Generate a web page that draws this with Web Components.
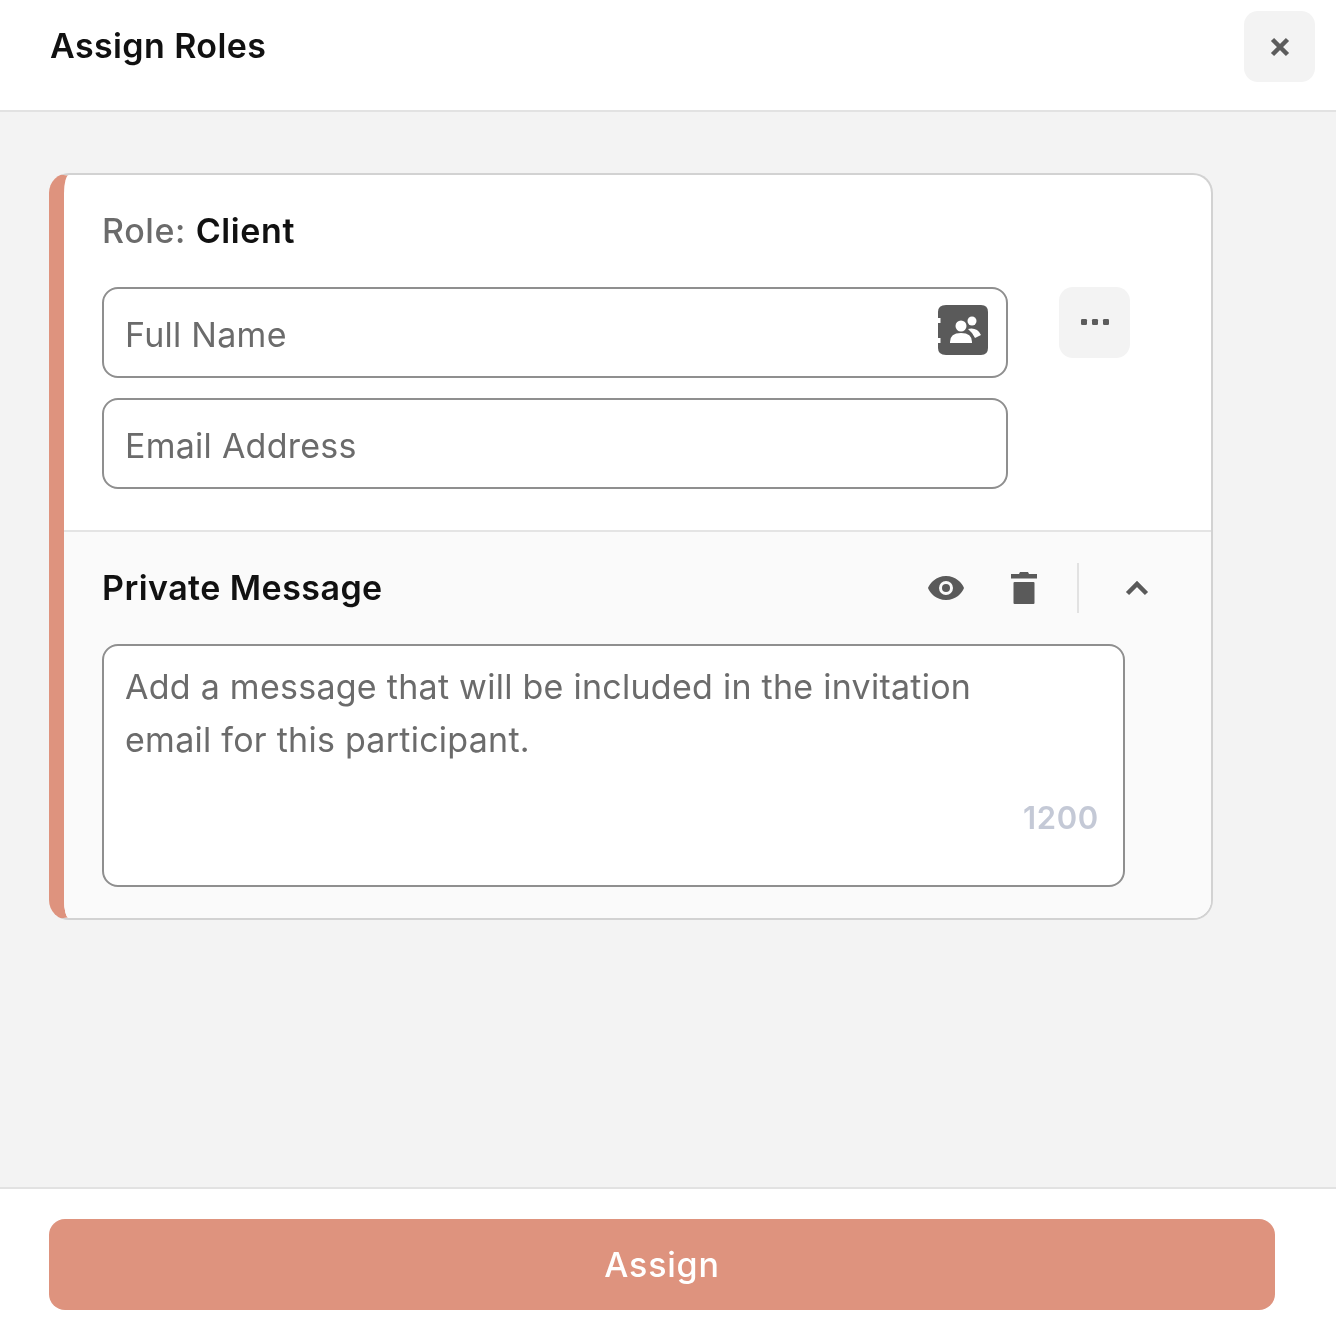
<!DOCTYPE html>
<html>
<head>
<meta charset="utf-8">
<title>Assign Roles</title>
<style>
  html, body { margin: 0; padding: 0; }
  body { font-family: Inter, "Noto Sans", sans-serif; background: #f3f3f3; }
</style>
</head>
<body>
<assign-dialog></assign-dialog>

<script>
const ICONS = {
    close: `<svg style="margin-top:2px" width="22" height="22" viewBox="0 0 22 22"><path d="M3.5 3.5 L18.500 18.500 M18.500 3.500 L3.500 18.500" stroke="#5c5c5c" stroke-width="4.500" fill="none"/></svg>`,
    dots: `<svg style="margin-bottom:2px" width="28" height="6" viewBox="0 0 28 6" fill="#5c5c5c"><rect width="6" height="6" rx="1.200"/><rect x="11" width="6" height="6" rx="1.200"/><rect x="22" width="6" height="6" rx="1.200"/></svg>`,
    contacts: `<svg width="52" height="52" viewBox="0 0 52 52"><path fill="#5a5a5a" d="M9 1 H44 Q51 1 51 8 V44 Q51 51 44 51 H9 Q1 51 1 44 V39 H3.500 V34 H1 V19 H3.500 V14 H1 V8 Q1 1 9 1Z"/><g fill="#fff"><circle cx="24" cy="22" r="5.500"/><circle cx="35" cy="17" r="4.500"/><path d="M13 38 Q13 29 24 29 Q35 29 35 38 V39 H13Z"/><path d="M31 25 Q40 23 44 31 L38 34 Q36 29 31 25Z"/></g></svg>`,
    eye: `<svg width="38" height="26" viewBox="0 0 38 26"><path fill="#5a5a5a" fill-rule="evenodd" d="M19 1 C29 1 35 8 37 13 C35 18 29 25 19 25 C9 25 3 18 1 13 C3 8 9 1 19 1Z M19 6 A7 7 0 1 0 19 20 A7 7 0 1 0 19 6Z"/><circle cx="19" cy="13" r="4" fill="#5a5a5a"/></svg>`,
    trash: `<svg width="26" height="32" viewBox="0 0 26 32" fill="#5a5a5a"><path d="M9 0 H17 L18 2 H26 V6.500 H0 V2 H8Z"/><rect x="2.500" y="10" width="21" height="22" rx="1"/></svg>`,
    chevron: `<svg width="24" height="16" viewBox="0 0 24 16"><path d="M2.500 13.500 L12 4 L21.500 13.500" stroke="#5a5a5a" stroke-width="4.500" fill="none"/></svg>`
};

class IconButton extends HTMLElement {
    connectedCallback() {
        if (this.shadowRoot) return;
        this.attachShadow({ mode: "open" });
        this.shadowRoot.innerHTML = `
            <style>
            :host { display: flex; flex: none; width: 71px; height: 71px; align-items: center; justify-content: center; background: #f3f3f3; border-radius: 14px; }
            </style>
            ${ICONS[this.getAttribute("icon")]}
        `;
    }
}
customElements.define("icon-button", IconButton);

class TextField extends HTMLElement {
    connectedCallback() {
        if (this.shadowRoot) return;
        this.attachShadow({ mode: "open" });
        this.shadowRoot.innerHTML = `
            <style>
            :host { display: flex; box-sizing: border-box; width: 906px; height: 91px; align-items: center; justify-content: space-between; padding: 4px 17px 0 21px; background: #fff; border: 2px solid #8f8f8f; border-radius: 16px; color: #6b6b6b; font-size: 34px; letter-spacing: 0.26px; }
            ::slotted(svg) { margin-top: -10px; }
            </style>
            <span>${this.getAttribute("placeholder")}</span>
            <slot></slot>
        `;
    }
}
customElements.define("text-field", TextField);

class MessageBox extends HTMLElement {
    connectedCallback() {
        if (this.shadowRoot) return;
        this.attachShadow({ mode: "open" });
        this.shadowRoot.innerHTML = `
            <style>
            :host { display: flex; flex-direction: column; box-sizing: border-box; width: 1023px; height: 243px; padding: 14px 24px 0 21px; background: #fff; border: 2px solid #8f8f8f; border-radius: 16px; color: #6b6b6b; font-size: 34px; letter-spacing: 0.26px; line-height: 53px; }
            .count { margin-top: 28px; align-self: flex-end; color: #c4c9d6; font-size: 31px; font-weight: 600; letter-spacing: 0.7px; line-height: 48px; }
            </style>
            <div><slot></slot></div>
            <div class="count">${this.getAttribute("count")}</div>
        `;
    }
}
customElements.define("message-box", MessageBox);

class RoleCard extends HTMLElement {
    connectedCallback() {
        if (this.shadowRoot) return;
        this.attachShadow({ mode: "open" });
        this.shadowRoot.innerHTML = `
            <style>
            :host { display: block; box-sizing: border-box; width: 1164px; height: 747px; overflow: hidden; background: #fff; border: 2px solid #d2d2d2; border-left: 15px solid #de937e; border-radius: 20px; }
            .top { box-sizing: border-box; height: 357px; padding: 34px 0 0 38px; border-bottom: 2px solid #e4e4e4; }
            .role { margin: 0 0 34px; height: 44px; line-height: 44px; color: #6b6b6b; font-size: 34px; font-weight: 500; letter-spacing: 0.6px; }
            .role b { color: #111; font-weight: 600; }
            .fields { display: flex; gap: 51px; }
            .stack { display: flex; flex-direction: column; gap: 20px; }
            .bottom { box-sizing: border-box; height: 386px; padding: 30px 0 0 38px; background: #fafafa; }
            .bar { display: flex; align-items: center; height: 52px; margin-bottom: 30px; }
            .bar h3 { flex: 1; margin: 0; color: #111; font-size: 34px; font-weight: 600; letter-spacing: 0.45px; line-height: 52px; }
            .tools { display: flex; align-items: center; margin-right: 62px; }
            .sep { width: 2px; height: 50px; margin: 0 46px 0 40px; background: #e2e2e2; }
            .tools svg:first-child { margin-right: 46px; }
            </style>
            <div class="top">
              <div class="role">Role: <b>Client</b></div>
              <div class="fields">
                <div class="stack">
                  <text-field placeholder="Full Name">${ICONS.contacts}</text-field>
                  <text-field placeholder="Email Address"></text-field>
                </div>
                <icon-button icon="dots"></icon-button>
              </div>
            </div>
            <div class="bottom">
              <div class="bar">
                <h3>Private Message</h3>
                <div class="tools">
                  ${ICONS.eye}
                  ${ICONS.trash}
                  <div class="sep"></div>
                  ${ICONS.chevron}
                </div>
              </div>
              <message-box count="1200">Add a message that will be included in the invitation<br>email for this participant.</message-box>
            </div>
        `;
    }
}
customElements.define("role-card", RoleCard);

class AssignDialog extends HTMLElement {
    connectedCallback() {
        if (this.shadowRoot) return;
        this.attachShadow({ mode: "open" });
        this.shadowRoot.innerHTML = `
            <style>
            :host { display: flex; flex-direction: column; height: 1336px; background: #f3f3f3; filter: blur(0.45px); }
            header { display: flex; flex: none; box-sizing: border-box; height: 112px; align-items: center; justify-content: space-between; padding: 0 21px 18px 50px; background: #fff; border-bottom: 2px solid #e2e2e2; }
            h1 { margin: 0 0 2px; color: #111; font-size: 34px; font-weight: 600; letter-spacing: 0.4px; }
            main { flex: 1; padding: 61px 0 0 49px; }
            footer { flex: none; box-sizing: border-box; height: 149px; padding: 30px 61px 0 49px; background: #fff; border-top: 2px solid #e2e2e2; }
            .assign { display: flex; height: 91px; align-items: center; justify-content: center; background: #de937e; border-radius: 16px; color: #fff; font-size: 34px; font-weight: 500; letter-spacing: 0.8px; }
            </style>
            <header>
              <h1>Assign Roles</h1>
              <icon-button icon="close"></icon-button>
            </header>
            <main><role-card></role-card></main>
            <footer><div class="assign">Assign</div></footer>
        `;
    }
}
customElements.define("assign-dialog", AssignDialog);
</script>
</body>
</html>
